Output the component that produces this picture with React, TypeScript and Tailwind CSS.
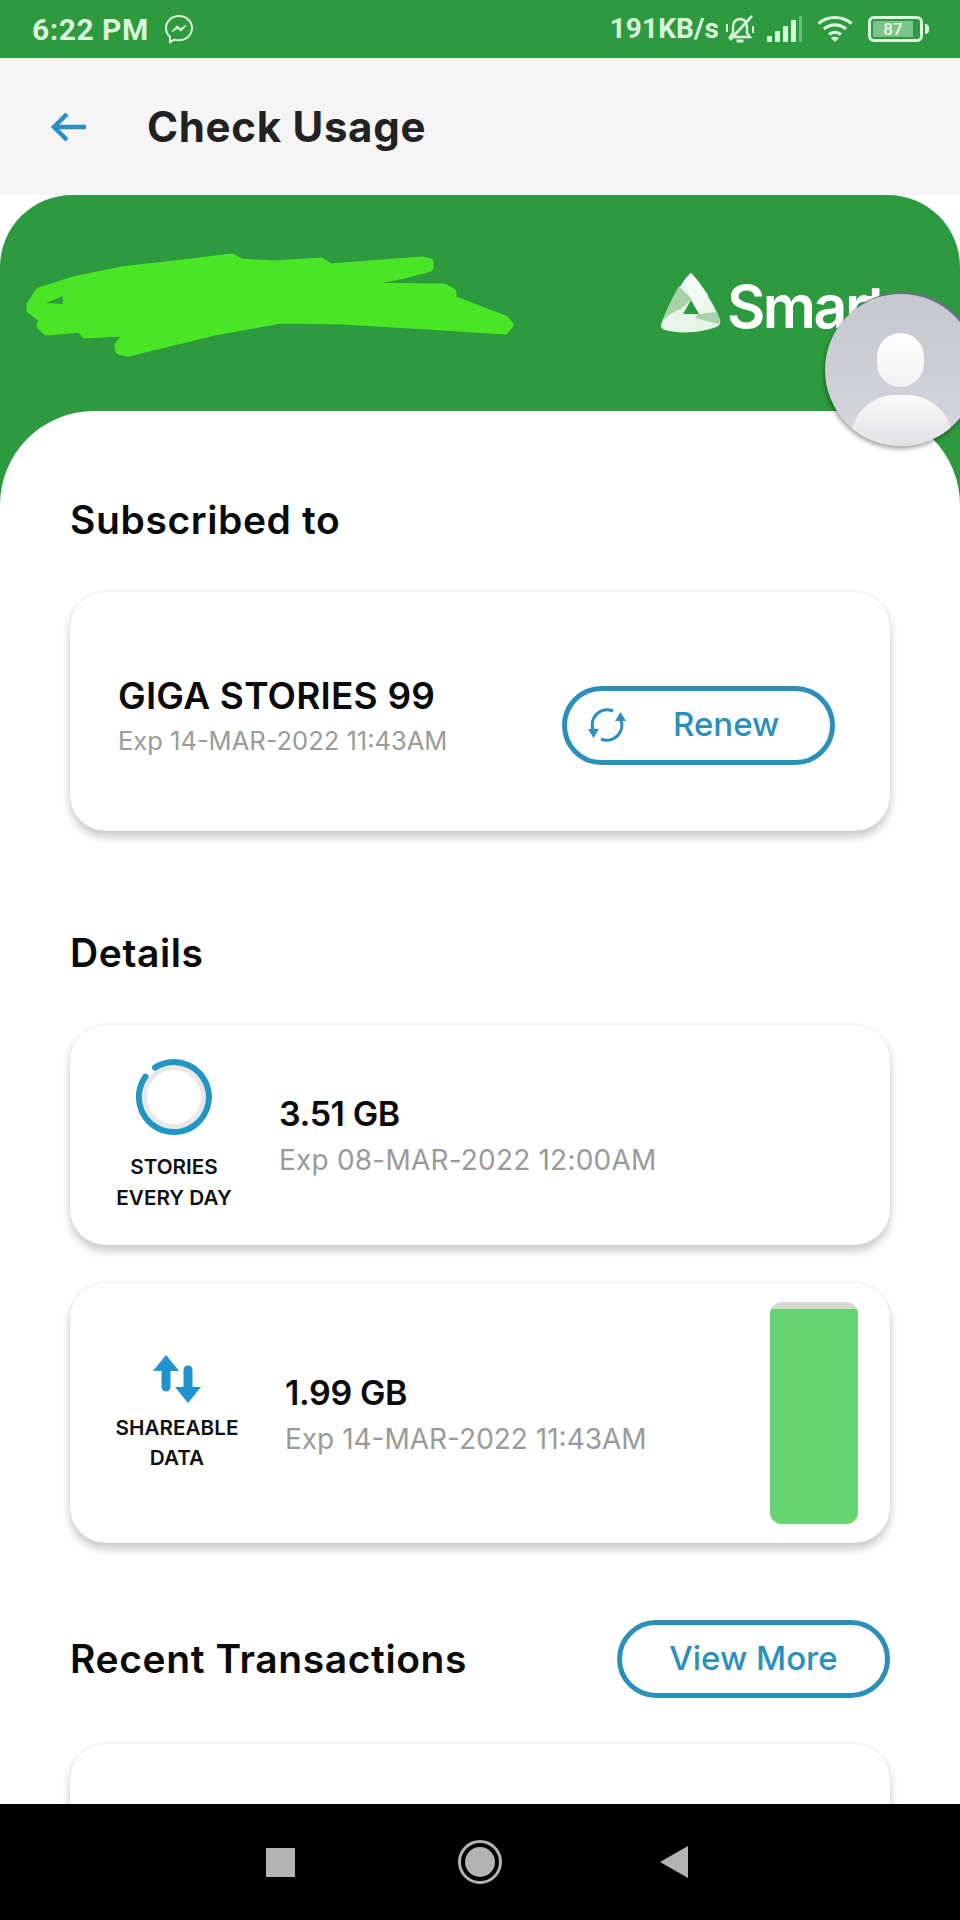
const FONT = "font-['Inter','Liberation_Sans',sans-serif]"
const ICON = '#d9f5dc'

function MessengerIcon() {
  return (
    <svg width="30" height="30" viewBox="0 0 30 30" fill="none" aria-hidden="true">
      <path
        d="M15 2C7.800 2 2 7.200 2 14c0 3.600 1.500 6.700 4 8.800V28l4.600-2.400c1.400.4 2.900.6 4.400.6 7.200 0 13-5.400 13-12.200S22.200 2 15 2z"
        stroke={ICON}
        strokeWidth="2"
      />
      <path d="M8 17.500l5-5.500 3.400 2.700 5.600-3.200-5 5.600-3.400-2.700z" fill={ICON} stroke={ICON} strokeWidth="1" />
    </svg>
  )
}

function BellMuteIcon() {
  return (
    <svg width="30" height="28" viewBox="0 0 30 28" fill="none" stroke={ICON} strokeWidth="2.400" aria-hidden="true">
      <path d="M15 4c-5 0-7 4-7 9v5l-3 4h20l-3-4v-5c0-5-2-9-7-9z" />
      <path d="M11.500 26h7" strokeWidth="3" />
      <path d="M27 1L5 25" strokeWidth="2.600" />
      <path d="M2 9v8M28 11v7" strokeWidth="2" />
    </svg>
  )
}

function SignalIcon() {
  return (
    <svg width="36" height="26" viewBox="0 0 36 26" aria-hidden="true">
      <rect x="0" y="20" width="5" height="6" rx="1" fill={ICON} />
      <rect x="8" y="15" width="5" height="11" rx="1" fill={ICON} />
      <rect x="16" y="10" width="5" height="16" rx="1" fill={ICON} />
      <rect x="24" y="4" width="5" height="22" rx="1" fill={ICON} />
      <rect x="32" y="0" width="3" height="26" rx="1" fill="#6fbf7c" />
    </svg>
  )
}

function WifiIcon() {
  return (
    <svg width="36" height="28" viewBox="0 0 36 28" fill="none" stroke={ICON} strokeWidth="3.200" aria-hidden="true">
      <path d="M1.500 8.500c9.500-8 23.500-8 33 0" />
      <path d="M7 14c6.500-5.500 15.500-5.500 22 0" />
      <path d="M12 19.500c3.500-3 8.500-3 12 0" />
      <path d="M18 27l-4-4c2.200-1.800 5.800-1.800 8 0z" fill={ICON} stroke="none" />
    </svg>
  )
}

function BatteryIcon() {
  return (
    <div className="flex items-center gap-[2px]">
      <div className="flex h-[26px] w-[55px] items-center rounded-[6px] border-[3px] border-[#d9f5dc] p-[2px]">
        <div className="flex h-full w-[40px] items-center justify-center bg-[#7cc488] text-[17px] leading-none font-medium text-[#e6f7e8]">
          87
        </div>
      </div>
      <div className="h-[10px] w-[4px] rounded-r-full bg-[#d9f5dc]" />
    </div>
  )
}

function StatusBar() {
  return (
    <div className="flex h-[58px] shrink-0 items-center justify-between bg-[#2e9a3f] pr-[31px] pl-[32px] font-['Roboto',sans-serif] text-[#d9f5dc]">
      <div className="flex items-center gap-[15px]">
        <span className="text-[30px] font-bold tracking-[0.5px]">6:22 PM</span>
        <MessengerIcon />
      </div>
      <div className="flex items-center">
        <span className="text-[28px] font-bold tracking-[0.1px]">191KB/s</span>
        <div className="ml-[6px]">
          <BellMuteIcon />
        </div>
        <div className="ml-[12px]">
          <SignalIcon />
        </div>
        <div className="ml-[14px]">
          <WifiIcon />
        </div>
        <div className="ml-[15px]">
          <BatteryIcon />
        </div>
      </div>
    </div>
  )
}

function BackArrow() {
  return (
    <svg width="36" height="30" viewBox="0 0 36 30" fill="none" stroke="#2b8fc4" strokeWidth="4.500" aria-hidden="true">
      <path d="M35 15H5" />
      <path d="M16 2L3 15l13 13" />
    </svg>
  )
}

function SmartLogo() {
  return (
    <div className="flex items-center">
      <svg width="60" height="61" viewBox="0 0 60 61" className="shrink-0" aria-hidden="true">
        <path
          d="M30 0c8 8 24 32 29 47 1 4-1 6-4 7-15 6-37 7-51 3-4-1-5-5-3-8C7 33 20 9 30 0z"
          fill="#e8f4e8"
        />
        <path d="M30 0c5 5 11 13 17 22L37 38 31 26 22 9c3-4 5-7 8-9z" fill="#f4faf4" />
        <path d="M18 13l13 13-11 10c-7 2-13 6-18 12C6 36 12 23 18 13z" fill="#a9d2ac" />
        <path d="M37 41l19-2 3 9c0 1 0 2-1 3-9-2-17-4-24-6z" fill="#a9d2ac" />
        <path d="M30 27l8 14H22z" fill="#2e9a3f" />
      </svg>
      <span className="mt-[7px] ml-[6px] text-[59px] leading-none font-semibold tracking-[-2.500px] text-white">Smart</span>
    </div>
  )
}

function Scribble() {
  return (
    <svg width="487" height="104" viewBox="0 0 487 104" className="overflow-visible" aria-hidden="true">
      <path
        d="M3 52L12 38 46 27 95 17 156 10 205 4 214 9 248 11 294 8 303 14 395 7 403 9 403 15 377 22 321 33 417 34 426 39 426 46 478 66 483 72 478 78 401 73 315 68 254 67 187 79 101 100 92 98 91 92 102 79 77 81 58 82 53 76 20 79 13 73 15 66 3 57z"
        fill="#4ae626"
        stroke="#4ae626"
        strokeWidth="7"
        strokeLinejoin="round"
      />
      <path d="M19 50L36 43 36 51z" fill="#2e9a3f" />
    </svg>
  )
}

function Avatar() {
  return (
    <div className="absolute top-[294px] left-[825px] h-[152px] w-[152px] overflow-hidden rounded-full bg-gradient-to-b from-[#c6c7cf] to-[#d6d7db] shadow-[-1px_3px_4px_rgba(0,0,0,0.35),2px_-2px_1px_#6a7288]">
      <div className="absolute top-[39px] left-[52px] h-[54px] w-[47px] rounded-full bg-gradient-to-b from-white to-[#f1f1f3]" />
      <div className="absolute top-[101px] left-[25px] h-[60px] w-[103px] rounded-t-[46px] bg-gradient-to-b from-[#fafafa] to-[#dcdde0]" />
    </div>
  )
}

function Card({ className, children }: { className: string; children?: React.ReactNode }) {
  return (
    <div className={`mx-[70px] rounded-[36px] bg-white shadow-[0_6px_10px_rgba(0,0,0,0.22),0_-1px_3px_rgba(0,0,0,0.06)] ${className}`}>
      {children}
    </div>
  )
}

function SectionTitle({ children }: { children: React.ReactNode }) {
  return <h2 className="text-[39px] leading-[44px] font-semibold tracking-[0.6px] text-[#0a0a0a]">{children}</h2>
}

function SyncIcon() {
  return (
    <svg width="40" height="40" viewBox="0 0 40 40" fill="none" stroke="#2b8fbc" strokeWidth="3.200" aria-hidden="true">
      <path d="M26 6A15 15 0 0 0 6.500 26" />
      <path d="M14 34A15 15 0 0 0 33.500 14" />
      <path d="M1 24h11l-5.500 9z" fill="#2b8fbc" stroke="none" />
      <path d="M39 16H28l5.500-9z" fill="#2b8fbc" stroke="none" />
    </svg>
  )
}

function UsageIcon() {
  return (
    <svg width="78" height="78" viewBox="0 0 78 78" fill="none" aria-hidden="true">
      <circle cx="39" cy="39" r="29.500" stroke="#e8e8e8" strokeWidth="5" />
      <path d="M20 9.600A35 35 0 1 1 10.500 18.600" stroke="#2195c4" strokeWidth="6" strokeLinecap="round" />
    </svg>
  )
}

function ShareIcon() {
  return (
    <svg width="50" height="50" viewBox="0 0 50 50" aria-hidden="true">
      <path d="M14 1L1 17h8.500v16a4.500 4.500 0 0 0 9 0V17H27z" fill="#1f93cf" />
      <path d="M36 49l13-16h-8.500V16a4.500 4.500 0 0 0-9 0v17H23z" fill="#1f93cf" />
    </svg>
  )
}

function UsageText({ amount, expiry, expiryClass }: { amount: string; expiry: string; expiryClass: string }) {
  return (
    <div>
      <p className="text-[34px] leading-[42px] font-semibold tracking-[-0.4px] text-[#0a0a0a]">{amount}</p>
      <p className={`mt-[9px] text-[28px] leading-[32px] text-[#9a9a9a] ${expiryClass}`}>{expiry}</p>
    </div>
  )
}

export default function App() {
  return (
    <div className={`relative flex h-[1920px] w-[960px] flex-col overflow-hidden bg-white ${FONT}`}>
      <StatusBar />
      <header className="flex h-[137px] shrink-0 items-center gap-[60px] bg-[#f5f5f5] pl-[51px]">
        <BackArrow />
        <h1 className="text-[42px] font-bold tracking-[0.7px] text-[#222222]">Check Usage</h1>
      </header>

      <main className="min-h-0 flex-1 overflow-hidden">
        <div className="flex h-[216px] items-start justify-between rounded-t-[72px] bg-[#2e9a3f] pt-[58px] pl-[27px]">
          <Scribble />
          <div className="w-[299px] shrink-0 pt-[17px]">
            <SmartLogo />
          </div>
        </div>
        <div className="bg-[linear-gradient(#2e9a3f_0,#2e9a3f_94px,#ffffff_94px)]">
          <div className="rounded-t-[94px] bg-white pt-[87px]">
            <div className="pl-[70px]">
              <SectionTitle>Subscribed to</SectionTitle>
            </div>
            <Card className="mt-[50px] flex h-[239px] items-center justify-between pr-[55px] pl-[48px]">
              <div className="pt-[7px]">
                <p className="text-[37px] leading-[44px] font-semibold tracking-[0.2px] text-[#0a0a0a]">GIGA STORIES 99</p>
                <p className="mt-[7px] text-[25.500px] leading-[32px] text-[#9a9a9a]">Exp 14-MAR-2022 11:43AM</p>
              </div>
              <button
                type="button"
                className="mt-[27px] flex h-[79px] w-[273px] items-center rounded-full border-[5px] border-[#2b8fbc] pl-[20px] text-[33px] font-medium text-[#2b8fbc]"
              >
                <SyncIcon />
                <span className="ml-[46px]">Renew</span>
              </button>
            </Card>

            <div className="mt-[100px] pl-[70px]">
              <SectionTitle>Details</SectionTitle>
            </div>
            <Card className="mt-[50px] flex h-[220px] items-center pl-[44px]">
              <div className="flex w-[120px] flex-col items-center">
                <UsageIcon />
                <p className="mt-[15px] text-center text-[20.700px] leading-[31px] font-semibold text-[#111111]">
                  STORIES
                  <br />
                  EVERY DAY
                </p>
              </div>
              <div className="ml-[45px] -translate-y-[1px]">
                <UsageText amount="3.51 GB" expiry="Exp 08-MAR-2022 12:00AM" expiryClass="tracking-[0.2px]" />
              </div>
            </Card>
            <Card className="mt-[38px] flex h-[260px] items-center justify-between pr-[32px] pl-[47px]">
              <div className="flex items-center">
                <div className="flex w-[120px] flex-col items-center">
                  <ShareIcon />
                  <p className="mt-[9px] text-center text-[20.700px] leading-[30px] font-semibold text-[#111111]">
                    SHAREABLE
                    <br />
                    DATA
                  </p>
                </div>
                <div className="ml-[48px]">
                  <UsageText amount="1.99 GB" expiry="Exp 14-MAR-2022 11:43AM" expiryClass="tracking-normal" />
                </div>
              </div>
              <div className="flex h-[222px] w-[88px] flex-col overflow-hidden rounded-[12px] bg-[#d6d9cc] pt-[7px]">
                <div className="flex-1 bg-[#66d470]" />
              </div>
            </Card>

            <div className="mt-[77px] mr-[70px] ml-[70px] flex items-center justify-between">
              <SectionTitle>Recent Transactions</SectionTitle>
              <button
                type="button"
                className="flex h-[78px] w-[273px] items-center justify-center rounded-full border-[5px] border-[#2b8fbc] text-[33px] font-medium text-[#2b8fbc]"
              >
                View More
              </button>
            </div>
            <Card className="mt-[46px] h-[200px]" />
          </div>
        </div>
      </main>

      <nav className="flex h-[116px] shrink-0 items-center justify-center gap-[163px] bg-black pr-[5px]">
        <div className="h-[29px] w-[29px] bg-[#b3b3b3]" />
        <div className="flex h-[44px] w-[44px] items-center justify-center rounded-full border-[3px] border-[#b3b3b3]">
          <div className="h-[30px] w-[30px] rounded-full bg-[#b3b3b3]" />
        </div>
        <svg width="30" height="32" viewBox="0 0 30 32" className="-ml-[6px]" aria-hidden="true">
          <path d="M29 0v32L1 16z" fill="#b3b3b3" />
        </svg>
      </nav>

      <Avatar />
    </div>
  )
}
